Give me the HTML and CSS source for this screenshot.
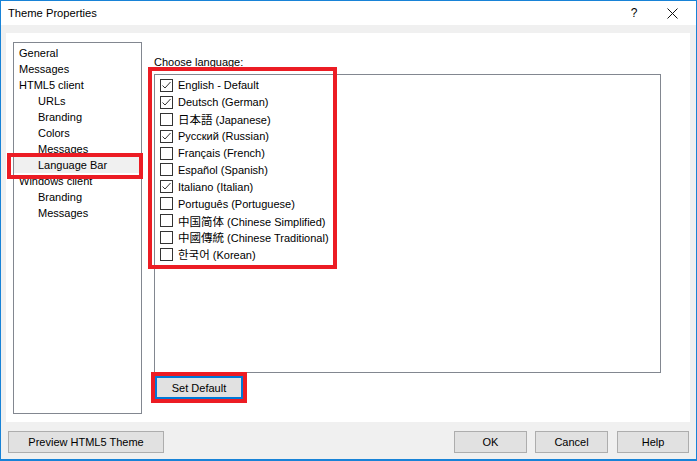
FILE: index.html
```html
<!DOCTYPE html>
<html>
<head>
<meta charset="utf-8">
<link rel="stylesheet" href="styles.css">
</head>
<body>
<div class="window">
  <div class="titlebar">
    <span class="title">Theme Properties</span>
    <span class="tb-help">?</span>
    <span class="tb-close"><svg width="11" height="11" viewBox="0 0 11 11"><path d="M0.5 0.5 L10.5 10.5 M10.5 0.5 L0.5 10.5" stroke="#111" stroke-width="1" fill="none"/></svg></span>
  </div>
  <div class="client">
    <div class="panel">
      <div class="tree">
        <div class="node">General</div>
        <div class="node">Messages</div>
        <div class="node">HTML5 client</div>
        <div class="node child">URLs</div>
        <div class="node child">Branding</div>
        <div class="node child">Colors</div>
        <div class="node child">Messages</div>
        <div class="node child selected">Language Bar</div>
        <div class="node">Windows client</div>
        <div class="node child">Branding</div>
        <div class="node child">Messages</div>
      </div>
      <div class="content">
        <div class="label">Choose language:</div>
        <div class="listbox">
          <div class="row"><span class="cb checked"><svg width="11" height="11" viewBox="0 0 11 11"><path d="M1.5 5.5 L4 8 L9.5 2" stroke="#333" stroke-width="1" fill="none"/></svg></span><span>English - Default</span></div>
          <div class="row"><span class="cb checked"><svg width="11" height="11" viewBox="0 0 11 11"><path d="M1.5 5.5 L4 8 L9.5 2" stroke="#333" stroke-width="1" fill="none"/></svg></span><span>Deutsch (German)</span></div>
          <div class="row"><span class="cb"></span><span><span class="jp" lang="ja">日本語</span> (Japanese)</span></div>
          <div class="row"><span class="cb checked"><svg width="11" height="11" viewBox="0 0 11 11"><path d="M1.5 5.5 L4 8 L9.5 2" stroke="#333" stroke-width="1" fill="none"/></svg></span><span>Русский (Russian)</span></div>
          <div class="row"><span class="cb"></span><span>Français (French)</span></div>
          <div class="row"><span class="cb"></span><span>Español (Spanish)</span></div>
          <div class="row"><span class="cb checked"><svg width="11" height="11" viewBox="0 0 11 11"><path d="M1.5 5.5 L4 8 L9.5 2" stroke="#333" stroke-width="1" fill="none"/></svg></span><span>Italiano (Italian)</span></div>
          <div class="row"><span class="cb"></span><span>Português (Portuguese)</span></div>
          <div class="row"><span class="cb"></span><span><span class="sc" lang="zh-Hans">中国简体</span> (Chinese Simplified)</span></div>
          <div class="row"><span class="cb"></span><span><span class="tc" lang="zh-Hant">中國傳統</span> (Chinese Traditional)</span></div>
          <div class="row"><span class="cb"></span><span><span class="kr" lang="ko">한국어</span> (Korean)</span></div>
        </div>
        <button class="btn btn-default">Set Default</button>
      </div>
      <div class="mark mark-tree"></div>
      <div class="mark mark-list"></div>
      <div class="mark mark-btn"></div>
    </div>
    <div class="footer">
      <button class="btn btn-preview">Preview HTML5 Theme</button>
      <div class="footer-right">
        <button class="btn btn-ok">OK</button>
        <button class="btn btn-cancel">Cancel</button>
        <button class="btn btn-help">Help</button>
      </div>
    </div>
  </div>
</div>
</body>
</html>
```

FILE: styles.css
```css
* { box-sizing: border-box; }
html, body { margin: 0; padding: 0; background: #f0f0f0; }
body {
  font-family: "Liberation Sans", Arial, sans-serif;
  font-size: 11px;
  color: #000;
}
.window {
  width: 697px;
  height: 461px;
  border: 1px solid #1883d7;
  border-bottom-width: 2px;
  background: #f0f0f0;
  display: flex;
  flex-direction: column;
}
.titlebar {
  height: 24px;
  background: #fff;
  display: flex;
  align-items: center;
  flex: none;
}
.title {
  font-size: 11.2px;
  margin-left: 7px;
  flex: 1;
  padding-bottom: 1px;
}
.tb-help {
  font-size: 12px;
  width: 20px;
  text-align: center;
  margin-right: 23px;
}
.tb-close {
  width: 11px;
  height: 11px;
  display: flex;
  margin-right: 18px;
}
.client {
  flex: 1;
  display: flex;
  flex-direction: column;
}
.panel {
  position: relative;
  height: 389px;
  margin: 8px 6px 0 5px;
  background: #fff;
  display: flex;
  padding: 9px 0 0 7px;
}
.tree {
  width: 129px;
  height: 372px;
  border: 1px solid #828790;
  padding-top: 2px;
  flex: none;
}
.node {
  height: 16px;
  line-height: 16px;
  padding-left: 5px;
  white-space: nowrap;
}
.node.child { padding-left: 24px; }
.node.selected { background: #f0f0f0; }
.content {
  margin-left: 12px;
  display: flex;
  flex-direction: column;
  align-items: flex-start;
}
.label {
  margin-top: 12px;
  height: 16px;
  line-height: 16px;
}
.listbox {
  margin-top: 4px;
  width: 507px;
  height: 299px;
  border: 1px solid #828790;
  padding: 2px 0 0 5px;
}
.row {
  height: 16.9px;
  display: flex;
  align-items: center;
  white-space: nowrap;
}
.cb {
  width: 13px;
  height: 13px;
  border: 1px solid #333;
  background: #fff;
  margin-right: 5px;
  display: flex;
  align-items: center;
  justify-content: center;
  flex: none;
}
.jp { font-family: "Noto Sans CJK JP", sans-serif; font-size: 11.5px; }
.sc { font-family: "Noto Sans CJK SC", sans-serif; font-size: 11.5px; }
.tc { font-family: "Noto Sans CJK TC", sans-serif; font-size: 11.5px; }
.kr { font-family: "Noto Sans CJK KR", sans-serif; font-size: 11.5px; }
.btn {
  font-family: "Liberation Sans", Arial, sans-serif;
  font-size: 11px;
  color: #000;
  background: #e1e1e1;
  border: 1px solid #adadad;
  height: 22px;
  padding: 0;
  margin: 0;
}
.btn-default {
  margin-top: 3px;
  margin-left: 1px;
  width: 88px;
  height: 23px;
  border: 2px solid #0078d7;
}
.footer {
  display: flex;
  justify-content: space-between;
  padding: 9px 7px 0 7px;
}
.btn-preview { width: 156px; }
.footer-right { display: flex; }
.btn-ok { width: 73px; }
.btn-cancel { width: 73px; margin-left: 8px; }
.btn-help { width: 72px; margin-left: 9px; }
.mark {
  position: absolute;
  border: 4px solid #ec1c24;
}
.mark-tree { left: 1px; top: 120px; width: 136px; height: 26px; }
.mark-list { left: 142px; top: 34px; width: 189px; height: 202px; }
.mark-btn { left: 145px; top: 339px; width: 96px; height: 31px; }
```
